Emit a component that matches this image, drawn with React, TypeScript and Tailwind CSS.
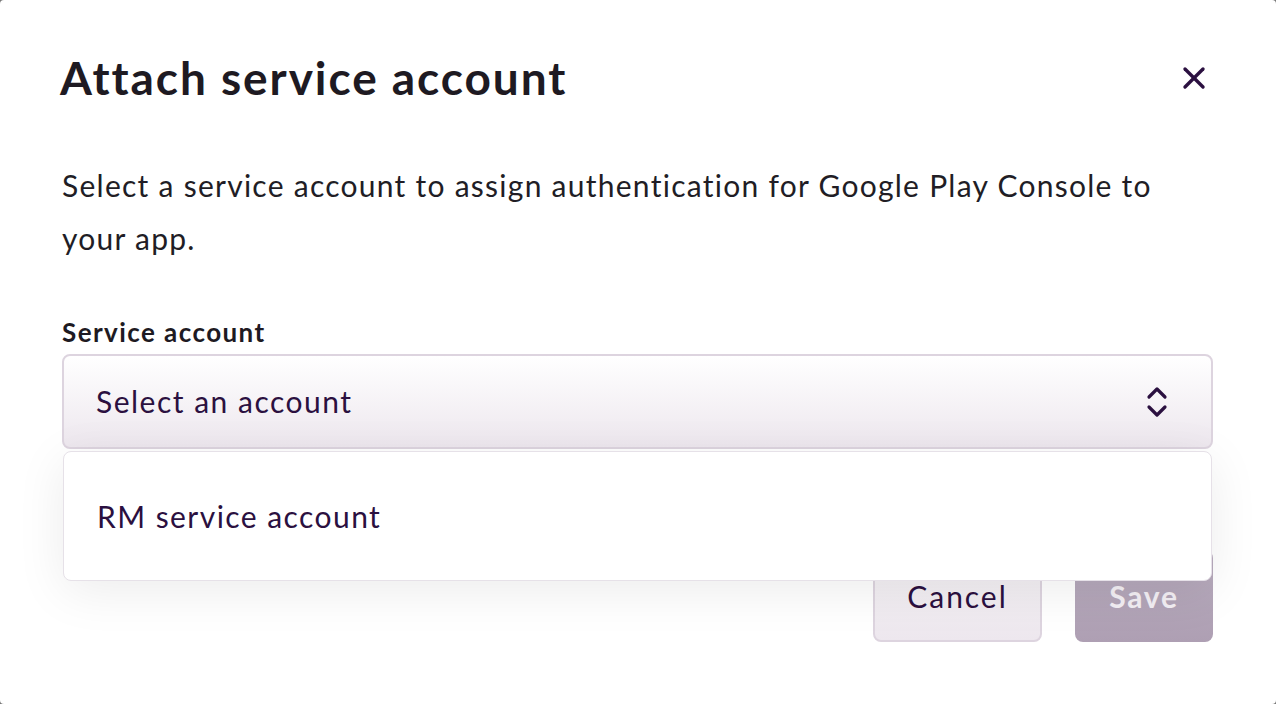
import React, { useState } from 'react';

const ChevronUpDown: React.FC = () => (
  <svg width="24" height="40" viewBox="0 0 24 40" fill="none" stroke="#2b1040" strokeWidth="3.2" strokeLinecap="round" strokeLinejoin="round">
    <path d="M4 15 L12 7 L20 15" />
    <path d="M4 25 L12 33 L20 25" />
  </svg>
);

const CloseIcon: React.FC = () => (
  <svg width="24" height="24" viewBox="0 0 24 24" fill="none" stroke="#2b1040" strokeWidth="3.4" strokeLinecap="round">
    <path d="M3 3 L21 21" />
    <path d="M21 3 L3 21" />
  </svg>
);

const App: React.FC = () => {
  const [open] = useState(true);
  const accounts = ['RM service account'];

  return (
    <div className="h-[704px] w-full bg-[#777] font-['Lato',sans-serif]">
      <div className="h-full rounded-[4px] bg-white pl-[60px] pr-[63px] pt-[50px]">
        <div className="flex items-center justify-between">
          <h1 className="text-[46px] leading-[56px] font-bold tracking-[0.042em] text-[#1e1a22]">Attach service account</h1>
          <button className="mr-[3px] p-1">
            <CloseIcon />
          </button>
        </div>

        <p className="mt-[53px] ml-[2px] text-[30px] leading-[53px] tracking-[0.042em] text-[#211d25]">
          Select a service account to assign authentication for Google Play Console to your app.
        </p>

        <div className="mt-[51px] ml-[2px]">
          <label className="block text-[26px] leading-[32px] font-bold tracking-[0.055em] text-[#1e1a22]">Service account</label>
          <div className="relative mt-[6px]">
            <button className="flex h-[95px] w-full items-center justify-between rounded-[8px] border-2 border-[#ddd4df] bg-gradient-to-b from-white to-[#ede7ee] pl-[32px] pr-[42px]">
              <span className="text-[30px] tracking-[0.05em] text-[#2b1040]">Select an account</span>
              <ChevronUpDown />
            </button>

            {open && (
              <div className="absolute left-[1px] right-[1px] top-[97px] z-10 rounded-[8px] border border-[#e6e1e8] bg-white py-[16px] shadow-[0_10px_50px_rgba(0,0,0,0.08)]">
                {accounts.map((a) => (
                  <div key={a} className="flex h-[96px] items-center pl-[33px] text-[30px] tracking-[0.048em] text-[#2b1040]">
                    {a}
                  </div>
                ))}
              </div>
            )}

            <div className="mt-[101px] flex justify-end gap-[33px]">
              <button className="h-[92px] w-[169px] rounded-[8px] border-2 border-[#ddd4df] bg-gradient-to-b from-[#f7f5f7] to-[#ede7ee] text-[30px] tracking-[0.065em] text-[#2b1040]">
                Cancel
              </button>
              <button className="h-[92px] w-[138px] rounded-[8px] bg-gradient-to-b from-[#b9adbf] to-[#ae9fb3] text-[30px] font-bold tracking-[0.06em] text-[#f3eff4]">
                Save
              </button>
            </div>
          </div>
        </div>
      </div>
    </div>
  );
};

export default App;
